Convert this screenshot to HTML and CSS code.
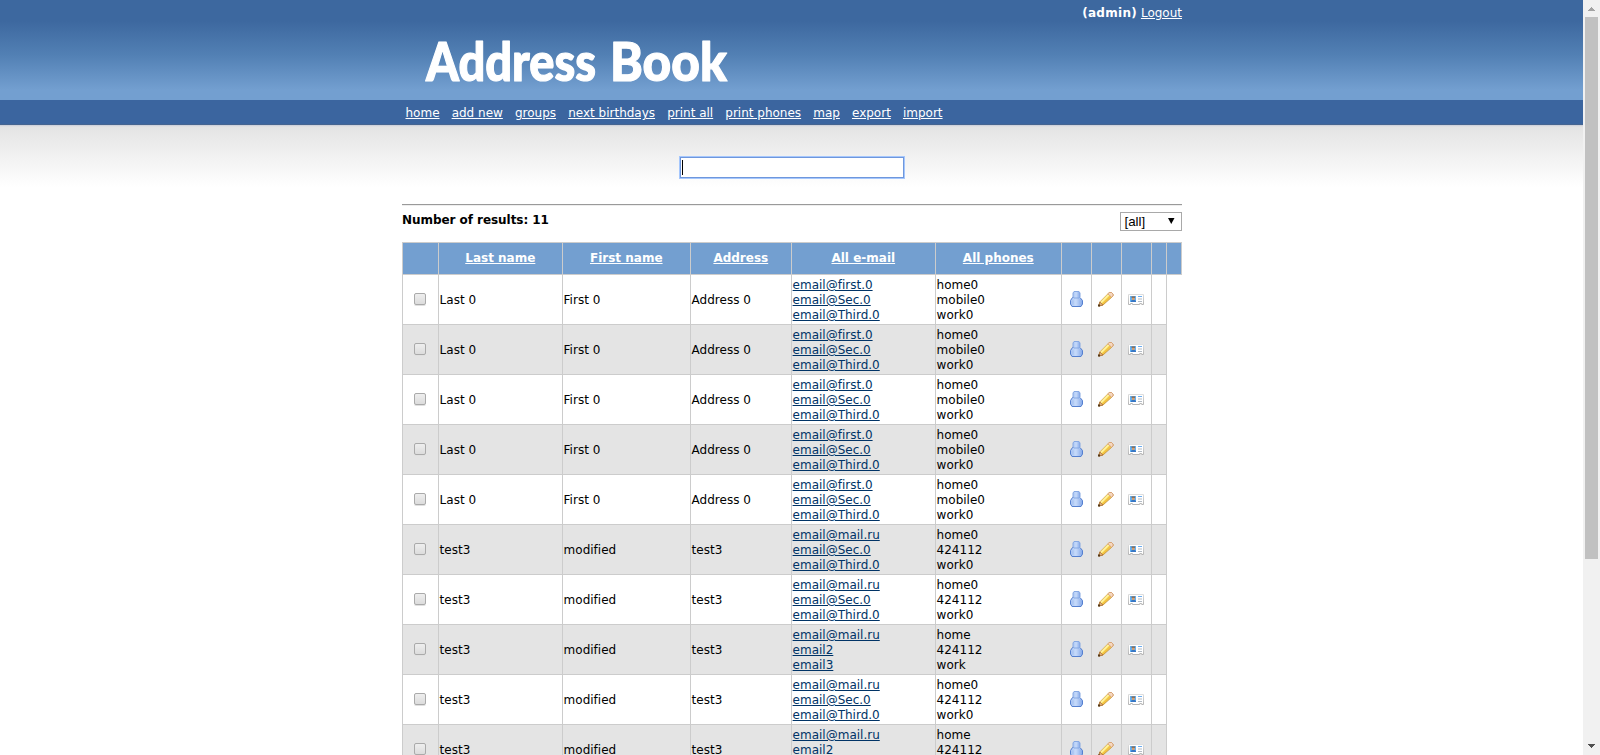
FILE: index.html
```
<!DOCTYPE html>
<html lang="en">
<head>
<meta charset="utf-8">
<title>Address Book</title>
<link rel="stylesheet" href="styles.css">
</head>
<body>
<svg class="defs" width="0" height="0" aria-hidden="true">
  <defs>
    <linearGradient id="blue" x1="0" y1="0" x2="1" y2="0"><stop offset="0" stop-color="#a9c5f3"/><stop offset=".45" stop-color="#c6dafa"/><stop offset="1" stop-color="#83a7e8"/></linearGradient>
    <linearGradient id="frame" x1="0" y1="0" x2="0" y2="1"><stop offset="0" stop-color="#dedede"/><stop offset="1" stop-color="#b5b5b5"/></linearGradient>
    <symbol id="person" viewBox="0 0 16 16">
      <path d="M4.500 6.500h7.500l2.500 3v3.500l-1.500 2.500H4L2.500 13V9.500z" fill="url(#blue)" stroke="#5580d0"/>
      <path d="M6 .5h5l1 1.500v4l-1 1H6L5 6V2z" fill="url(#blue)" stroke="#86a8e2"/>
      <path d="M5 9.500v4M12 9.500v4" stroke="#9bb9ee" stroke-width=".7"/>
    </symbol>
    <symbol id="pencil" viewBox="0 0 16 16">
      <path d="M.8 15 1.800 11 11.300 1.500h2.200l1.500 1.500v2L5 14z" fill="#f7d24e" stroke="#c99238" stroke-width=".9"/>
      <path d="M3 11.500 11.500 3" stroke="#fff19a" stroke-width="2"/>
      <path d="M4.500 13 13 4.500" stroke="#efb83a" stroke-width="1"/>
      <path d="M11.300 1.500h2.200l1.500 1.500v2l-1.400 1.200-3.800-3.400z" fill="#f6d8c0" stroke="#d6a078" stroke-width=".9"/>
      <path d="M1.800 11 5 14 .8 15z" fill="#e0b07e" stroke="#a9713c" stroke-width=".8"/>
      <path d="M0 13.500h2v2H0z" fill="#543817"/>
    </symbol>
    <symbol id="card" viewBox="0 0 16 16">
      <path d="M.5 3.500h15v10h-1.800v-1h-2v1H4.500v-1h-2v1h-2z" fill="#fff" stroke="url(#frame)"/>
      <path d="M2 5h6v6H2z" fill="#62b0f2"/>
      <path d="M3 11V9.700L4.200 9h2.600L8 10v1z" fill="#3877c4"/>
      <path d="M4 6.500h2.500V9H4z" fill="#d99b66"/><path d="M3.500 5.500h3.500v1.200H3.500z" fill="#8a5c38"/>
      <path d="M10 5.500h4" stroke="#6eaef0"/><path d="M10 8h4M10 10.500h4" stroke="#b4bbc4"/>
    </symbol>
  </defs>
</svg>
<div class="page">
  <header class="header">
    <div class="wrap">
      <div class="user"><b>(admin)</b> <a href="#">Logout</a></div>
      <svg class="logo" width="320" height="60" role="img" aria-label="Address Book">
        <text x="24" y="56" textLength="170" lengthAdjust="spacingAndGlyphs">Address</text>
        <text x="208" y="56" textLength="117" lengthAdjust="spacingAndGlyphs">Book</text>
      </svg>
    </div>
  </header>
  <nav class="nav"><div class="wrap links">
    <a href="#">home</a><a href="#">add new</a><a href="#">groups</a><a href="#">next birthdays</a><a href="#">print all</a><a href="#">print phones</a><a href="#">map</a><a href="#">export</a><a href="#">import</a>
  </div></nav>
  <main class="content"><div class="wrap">
    <div class="search"><div class="field"><span class="caret"></span></div></div>
    <div class="rule"></div>
    <div class="summary"><b>Number of results: 11</b><div class="select"><span>[all]</span><svg width="7" height="6"><path d="M0 0h6.500L3.250 6z"/></svg></div></div>
    <table class="grid">
      <colgroup><col class="c36"><col class="c124"><col class="c128"><col class="c101"><col class="c144"><col class="c126"><col class="c30"><col class="c30"><col class="c30"><col class="c15"><col class="c15"></colgroup>
      <tr class="head"><th></th><th><a href="#">Last name</a></th><th><a href="#">First name</a></th><th><a href="#">Address</a></th><th><a href="#">All e-mail</a></th><th><a href="#">All phones</a></th><th></th><th></th><th></th><th></th><th></th></tr>
      <tr><td class="tool"><i class="check"></i></td><td>Last 0</td><td>First 0</td><td>Address 0</td><td><a href="#">email@first.0</a><br><a href="#">email@Sec.0</a><br><a href="#">email@Third.0</a></td><td>home0<br>mobile0<br>work0</td><td class="tool"><svg class="icon"><use href="#person"/></svg></td><td class="tool"><svg class="icon"><use href="#pencil"/></svg></td><td class="tool"><svg class="icon"><use href="#card"/></svg></td><td></td></tr>
      <tr class="odd"><td class="tool"><i class="check"></i></td><td>Last 0</td><td>First 0</td><td>Address 0</td><td><a href="#">email@first.0</a><br><a href="#">email@Sec.0</a><br><a href="#">email@Third.0</a></td><td>home0<br>mobile0<br>work0</td><td class="tool"><svg class="icon"><use href="#person"/></svg></td><td class="tool"><svg class="icon"><use href="#pencil"/></svg></td><td class="tool"><svg class="icon"><use href="#card"/></svg></td><td></td></tr>
      <tr><td class="tool"><i class="check"></i></td><td>Last 0</td><td>First 0</td><td>Address 0</td><td><a href="#">email@first.0</a><br><a href="#">email@Sec.0</a><br><a href="#">email@Third.0</a></td><td>home0<br>mobile0<br>work0</td><td class="tool"><svg class="icon"><use href="#person"/></svg></td><td class="tool"><svg class="icon"><use href="#pencil"/></svg></td><td class="tool"><svg class="icon"><use href="#card"/></svg></td><td></td></tr>
      <tr class="odd"><td class="tool"><i class="check"></i></td><td>Last 0</td><td>First 0</td><td>Address 0</td><td><a href="#">email@first.0</a><br><a href="#">email@Sec.0</a><br><a href="#">email@Third.0</a></td><td>home0<br>mobile0<br>work0</td><td class="tool"><svg class="icon"><use href="#person"/></svg></td><td class="tool"><svg class="icon"><use href="#pencil"/></svg></td><td class="tool"><svg class="icon"><use href="#card"/></svg></td><td></td></tr>
      <tr><td class="tool"><i class="check"></i></td><td>Last 0</td><td>First 0</td><td>Address 0</td><td><a href="#">email@first.0</a><br><a href="#">email@Sec.0</a><br><a href="#">email@Third.0</a></td><td>home0<br>mobile0<br>work0</td><td class="tool"><svg class="icon"><use href="#person"/></svg></td><td class="tool"><svg class="icon"><use href="#pencil"/></svg></td><td class="tool"><svg class="icon"><use href="#card"/></svg></td><td></td></tr>
      <tr class="odd"><td class="tool"><i class="check"></i></td><td>test3</td><td>modified</td><td>test3</td><td><a href="#">email@mail.ru</a><br><a href="#">email@Sec.0</a><br><a href="#">email@Third.0</a></td><td>home0<br>424112<br>work0</td><td class="tool"><svg class="icon"><use href="#person"/></svg></td><td class="tool"><svg class="icon"><use href="#pencil"/></svg></td><td class="tool"><svg class="icon"><use href="#card"/></svg></td><td></td></tr>
      <tr><td class="tool"><i class="check"></i></td><td>test3</td><td>modified</td><td>test3</td><td><a href="#">email@mail.ru</a><br><a href="#">email@Sec.0</a><br><a href="#">email@Third.0</a></td><td>home0<br>424112<br>work0</td><td class="tool"><svg class="icon"><use href="#person"/></svg></td><td class="tool"><svg class="icon"><use href="#pencil"/></svg></td><td class="tool"><svg class="icon"><use href="#card"/></svg></td><td></td></tr>
      <tr class="odd"><td class="tool"><i class="check"></i></td><td>test3</td><td>modified</td><td>test3</td><td><a href="#">email@mail.ru</a><br><a href="#">email2</a><br><a href="#">email3</a></td><td>home<br>424112<br>work</td><td class="tool"><svg class="icon"><use href="#person"/></svg></td><td class="tool"><svg class="icon"><use href="#pencil"/></svg></td><td class="tool"><svg class="icon"><use href="#card"/></svg></td><td></td></tr>
      <tr><td class="tool"><i class="check"></i></td><td>test3</td><td>modified</td><td>test3</td><td><a href="#">email@mail.ru</a><br><a href="#">email@Sec.0</a><br><a href="#">email@Third.0</a></td><td>home0<br>424112<br>work0</td><td class="tool"><svg class="icon"><use href="#person"/></svg></td><td class="tool"><svg class="icon"><use href="#pencil"/></svg></td><td class="tool"><svg class="icon"><use href="#card"/></svg></td><td></td></tr>
      <tr class="odd"><td class="tool"><i class="check"></i></td><td>test3</td><td>modified</td><td>test3</td><td><a href="#">email@mail.ru</a><br><a href="#">email2</a><br><a href="#">email3</a></td><td>home<br>424112<br>work</td><td class="tool"><svg class="icon"><use href="#person"/></svg></td><td class="tool"><svg class="icon"><use href="#pencil"/></svg></td><td class="tool"><svg class="icon"><use href="#card"/></svg></td><td></td></tr>
    </table>
  </div></main>
</div>
<div class="scrollbar">
  <svg class="arrow" width="7" height="4" shape-rendering="crispEdges"><path d="M3 0h1v1h1v1h1v1h1v1H0V3h1V2h1V1h1z" fill="#a3a3a3"/></svg>
  <div class="thumb"></div>
  <svg class="arrow down" width="7" height="4" shape-rendering="crispEdges"><path d="M0 0h7v1H6v1H5v1H4v1H3V3H2V2H1V1H0z" fill="#505050"/></svg>
</div>
</body>
</html>
```
FILE: styles.css
```
* { box-sizing: border-box; }
body { margin: 0; height: 755px; overflow: hidden; display: flex; background: #fff; color: #000; font: 12px/15px "DejaVu Sans", Verdana, sans-serif; font-variant-ligatures: none; }
.defs { position: absolute; }
.page { width: 1583px; height: 755px; overflow: hidden; }
.wrap { width: 780px; margin-left: 402px; }
.header { height: 100px; background: linear-gradient(#3d689f 0, #3d689f 21px, #5280b4 55px, #739fd0 90px, #739fd0 100px); color: #fff; }
.user { padding-top: 6px; text-align: right; height: 25px; }
.user b { letter-spacing: .3px; }
.user a, .nav a, .head a { color: #fff; }
.logo { display: block; overflow: visible; }
.logo text { font: 900 54px Lato, sans-serif; fill: #fff; stroke: #fff; stroke-width: 1.2px; stroke-linejoin: round; }
.nav { height: 25px; background: #3b659f; border-bottom: 1px solid #466590; }
.links { display: flex; gap: 12.1px; padding: 6px 0 0 3.5px; white-space: nowrap; }
.content { background: linear-gradient(#c6cbd8 0, #d9dadf 1px, #e4e4e4 2px, #fff 62px); }
.search { height: 79px; padding: 31px 0 0 0; display: flex; justify-content: center; align-items: flex-start; }
.field { width: 226px; height: 23px; padding: 2px; background: #fff; border: 2px solid #6f97dc; outline: 1px solid #a5c7fd; outline-offset: -1px; }
.caret { display: block; width: 1px; height: 15px; background: #000; margin-left: -1px; }
.rule { height: 2px; border-top: 1px solid #9a9a9a; background: #eee; }
.summary { height: 36px; display: flex; justify-content: space-between; align-items: flex-start; padding-top: 6px; }
.summary b { line-height: 17px; letter-spacing: -.05px; }
.select { width: 62px; height: 19px; border: 1px solid #a9a9a9; background: #fff; display: flex; justify-content: space-between; align-items: center; padding: 0 6px 1px 3.5px; font: 13.333px/17px "Liberation Sans", Arial, sans-serif; }
.grid { border-collapse: collapse; table-layout: fixed; width: 780px; }
.c36 { width: 36px; } .c124 { width: 124px; } .c128 { width: 128px; } .c101 { width: 101px; } .c144 { width: 144px; } .c126 { width: 126px; } .c30 { width: 30px; } .c15 { width: 15px; }
th, td { border: 1px solid #ccc; padding: 2px 1px 0 .6px; height: 50px; vertical-align: middle; white-space: nowrap; }
th { height: 32px; background: #739fd0; padding-top: 0; }
td a { color: #036; }
.odd td { background: #e4e4e4; }
.tool { padding: 0 2px 2px 0; }
.icon { display: block; width: 16px; height: 16px; margin: 0 auto; }
.check { display: block; width: 12px; height: 12px; margin: 0 auto; border: 1px solid #aaa; border-radius: 2px; background: linear-gradient(#eee, #dcdcdc); box-shadow: 0 1px 0 #e0e0e0; }
.scrollbar { width: 17px; height: 755px; background: #f1f1f1; display: flex; flex-direction: column; align-items: center; }
.arrow { margin: 7px 0 6px; flex: none; }
.thumb { width: 13px; height: 542px; background: #c1c1c1; }
.arrow.down { margin: auto 0 7px; }
```
